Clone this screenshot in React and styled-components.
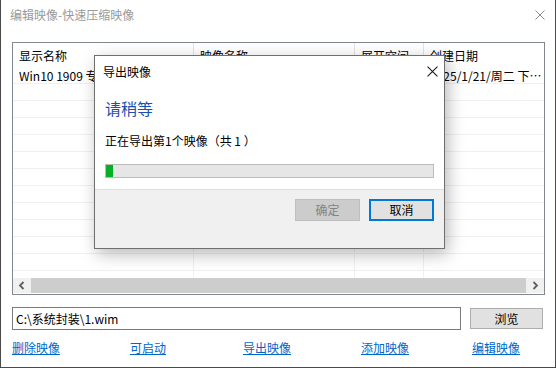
import React from "react";
import styled, { createGlobalStyle } from "styled-components";

const GlobalStyle = createGlobalStyle`
  html, body {
    margin: 0;
    padding: 0;
    background: #fff;
  }
  body {
    font-family: "Noto Sans CJK SC", "Microsoft YaHei", sans-serif;
    font-size: 12px;
    color: #000;
  }
`;

const Window = styled.div`
  position: relative;
  width: 556px;
  height: 368px;
  box-sizing: border-box;
  border: 1px solid #4a4a4a;
  border-top: none;
  background: #fff;
  overflow: hidden;
`;

const TitleBar = styled.div`
  height: 30px;
  display: flex;
  align-items: center;
  justify-content: space-between;
  padding: 0 10px 0 9px;
`;

const Title = styled.span`
  color: #9a9a9a;
  font-size: 12px;
  line-height: 16px;
`;

const Content = styled.div`
  padding: 12px 10px 0 11px;
`;

const ListBox = styled.div`
  height: 253px;
  box-sizing: border-box;
  border: 1px solid #828790;
  display: flex;
  flex-direction: column;
  overflow: hidden;
`;

const columns = "181px 161px 69px 1fr";

const HeaderRow = styled.div`
  display: grid;
  grid-template-columns: ${columns};
  height: 24px;
  flex-shrink: 0;
`;

const HeaderCell = styled.div`
  padding: 2px 0 0 6px;
  line-height: 22px;
  font-size: 12px;
  white-space: nowrap;
  overflow: hidden;
  border-right: 1px solid ${(p) => (p.$last ? "transparent" : "#e3e3e3")};
`;

const Rows = styled.div`
  flex: 1;
  overflow: hidden;
`;

const Row = styled.div`
  display: grid;
  grid-template-columns: ${columns};
  height: 17px;
  box-sizing: border-box;
  border-bottom: 1px solid #f0f0f0;
`;

const Cell = styled.div`
  padding: 1px 0 0 6px;
  line-height: 15px;
  font-size: 12px;
  white-space: nowrap;
  overflow: hidden;
  text-overflow: ellipsis;
  border-right: 1px solid ${(p) => (p.$last ? "transparent" : "#f0f0f0")};
`;

const ScrollBar = styled.div`
  height: 15px;
  margin-bottom: 1px;
  flex-shrink: 0;
  display: flex;
  background: #f0f0f0;
`;

const ScrollButton = styled.div`
  width: 18px;
  display: flex;
  align-items: center;
  justify-content: center;
`;

const Thumb = styled.div`
  flex: 1;
  background: #cdcdcd;
`;

const PathRow = styled.div`
  display: flex;
  gap: 9px;
  margin-top: 12px;
`;

const PathInput = styled.div`
  width: 449px;
  height: 23px;
  box-sizing: border-box;
  border: 1px solid #7a7a7a;
  padding-left: 3px;
  line-height: 21px;
  font-size: 12px;
`;

const BrowseButton = styled.div`
  width: 73px;
  height: 21px;
  margin-top: 1px;
  box-sizing: border-box;
  border: 1px solid #adadad;
  background: #e1e1e1;
  text-align: center;
  line-height: 19px;
  font-size: 12px;
`;

const Links = styled.div`
  display: grid;
  grid-template-columns: 118px 113px 118px 111px auto;
  height: 20px;
  margin-top: 8px;
  align-items: center;
`;

const Link = styled.a`
  color: #0066cc;
  text-decoration: underline;
  font-size: 12px;
  line-height: 16px;
  justify-self: start;
`;

const Dialog = styled.div`
  position: absolute;
  left: 93px;
  top: 55px;
  width: 351px;
  height: 194px;
  box-sizing: border-box;
  border: 1px solid #6f6f6f;
  background: #fff;
  display: flex;
  flex-direction: column;
  box-shadow: 3px 5px 16px rgba(0, 0, 0, 0.28);
`;

const DialogHead = styled.div`
  height: 32px;
  display: flex;
  align-items: center;
  justify-content: space-between;
  padding: 0 6px 0 8px;
`;

const DialogTitle = styled.span`
  font-size: 12px;
  line-height: 16px;
`;

const DialogBody = styled.div`
  flex: 1;
  padding: 10px 10px 11px;
`;

const Heading = styled.div`
  color: #1c4fb0;
  font-size: 16px;
  line-height: 20px;
`;

const Message = styled.div`
  margin-top: 15px;
  font-size: 12px;
  line-height: 16px;
`;

const Progress = styled.div`
  margin-top: 15px;
  width: 329px;
  height: 14px;
  box-sizing: border-box;
  border: 1px solid #bcbcbc;
  background: #e6e6e6;
`;

const ProgressFill = styled.div`
  height: 100%;
  background: #06b025;
`;

const DialogFooter = styled.div`
  height: 60px;
  box-sizing: border-box;
  border-top: 1px solid #dfdfdf;
  background: #f0f0f0;
  display: flex;
  justify-content: flex-end;
  align-items: flex-start;
  gap: 9px;
  padding: 9px 10px 0;
`;

const DialogButton = styled.div`
  width: 65px;
  height: 22px;
  box-sizing: border-box;
  text-align: center;
  font-size: 12px;
  border: ${(p) => (p.$primary ? "2px solid #0078d7" : "1px solid #bfbfbf")};
  background: ${(p) => (p.$disabled ? "#cccccc" : "#e1e1e1")};
  color: ${(p) => (p.$disabled ? "#838383" : "#000")};
  line-height: ${(p) => (p.$primary ? "18px" : "20px")};
`;

const CloseIcon = ({ color, size }) => (
  <svg width={size} height={size} viewBox="0 0 10 10">
    <path d="M0.5 0.5 L9.5 9.5 M9.5 0.5 L0.5 9.5" stroke={color} strokeWidth="1" fill="none" />
  </svg>
);

const Chevron = ({ dir }) => (
  <svg width="8" height="9" viewBox="0 0 8 9">
    <path
      d={dir === "left" ? "M5.5 1 L2 4.5 L5.5 8" : "M2.5 1 L6 4.5 L2.5 8"}
      stroke="#606060"
      strokeWidth="1.8"
      fill="none"
    />
  </svg>
);

const headers = ["显示名称", "映像名称", "展开空间", "创建日期"];
const rows = [["Win10 1909 专业版", "Windows 10 Pro", "15.2 GB", "2025/1/21/周二 下午 3:12"]];

const App = () => {
  const blank = Array.from({ length: 12 }, () => ["", "", "", ""]);
  const progress = 2;

  return (
    <>
      <GlobalStyle />
      <Window>
        <TitleBar>
          <Title>编辑映像-快速压缩映像</Title>
          <CloseIcon color="#8a8a8a" size={10} />
        </TitleBar>
        <Content>
          <ListBox>
            <HeaderRow>
              {headers.map((h, i) => (
                <HeaderCell key={h} $last={i === headers.length - 1}>
                  {h}
                </HeaderCell>
              ))}
            </HeaderRow>
            <Rows>
              {[...rows, ...blank].map((r, i) => (
                <Row key={i}>
                  {r.map((c, j) => (
                    <Cell key={j} $last={j === r.length - 1}>
                      {c}
                    </Cell>
                  ))}
                </Row>
              ))}
            </Rows>
            <ScrollBar>
              <ScrollButton>
                <Chevron dir="left" />
              </ScrollButton>
              <Thumb />
              <ScrollButton>
                <Chevron dir="right" />
              </ScrollButton>
            </ScrollBar>
          </ListBox>
          <PathRow>
            <PathInput>C:\系统封装\1.wim</PathInput>
            <BrowseButton>浏览</BrowseButton>
          </PathRow>
          <Links>
            <Link>删除映像</Link>
            <Link>可启动</Link>
            <Link>导出映像</Link>
            <Link>添加映像</Link>
            <Link>编辑映像</Link>
          </Links>
        </Content>

        <Dialog>
          <DialogHead>
            <DialogTitle>导出映像</DialogTitle>
            <CloseIcon color="#1a1a1a" size={11} />
          </DialogHead>
          <DialogBody>
            <Heading>请稍等</Heading>
            <Message>正在导出第1个映像（共 1 ）</Message>
            <Progress>
              <ProgressFill style={{ width: `${progress}%` }} />
            </Progress>
          </DialogBody>
          <DialogFooter>
            <DialogButton $disabled>确定</DialogButton>
            <DialogButton $primary>取消</DialogButton>
          </DialogFooter>
        </Dialog>
      </Window>
    </>
  );
};

export default App;
